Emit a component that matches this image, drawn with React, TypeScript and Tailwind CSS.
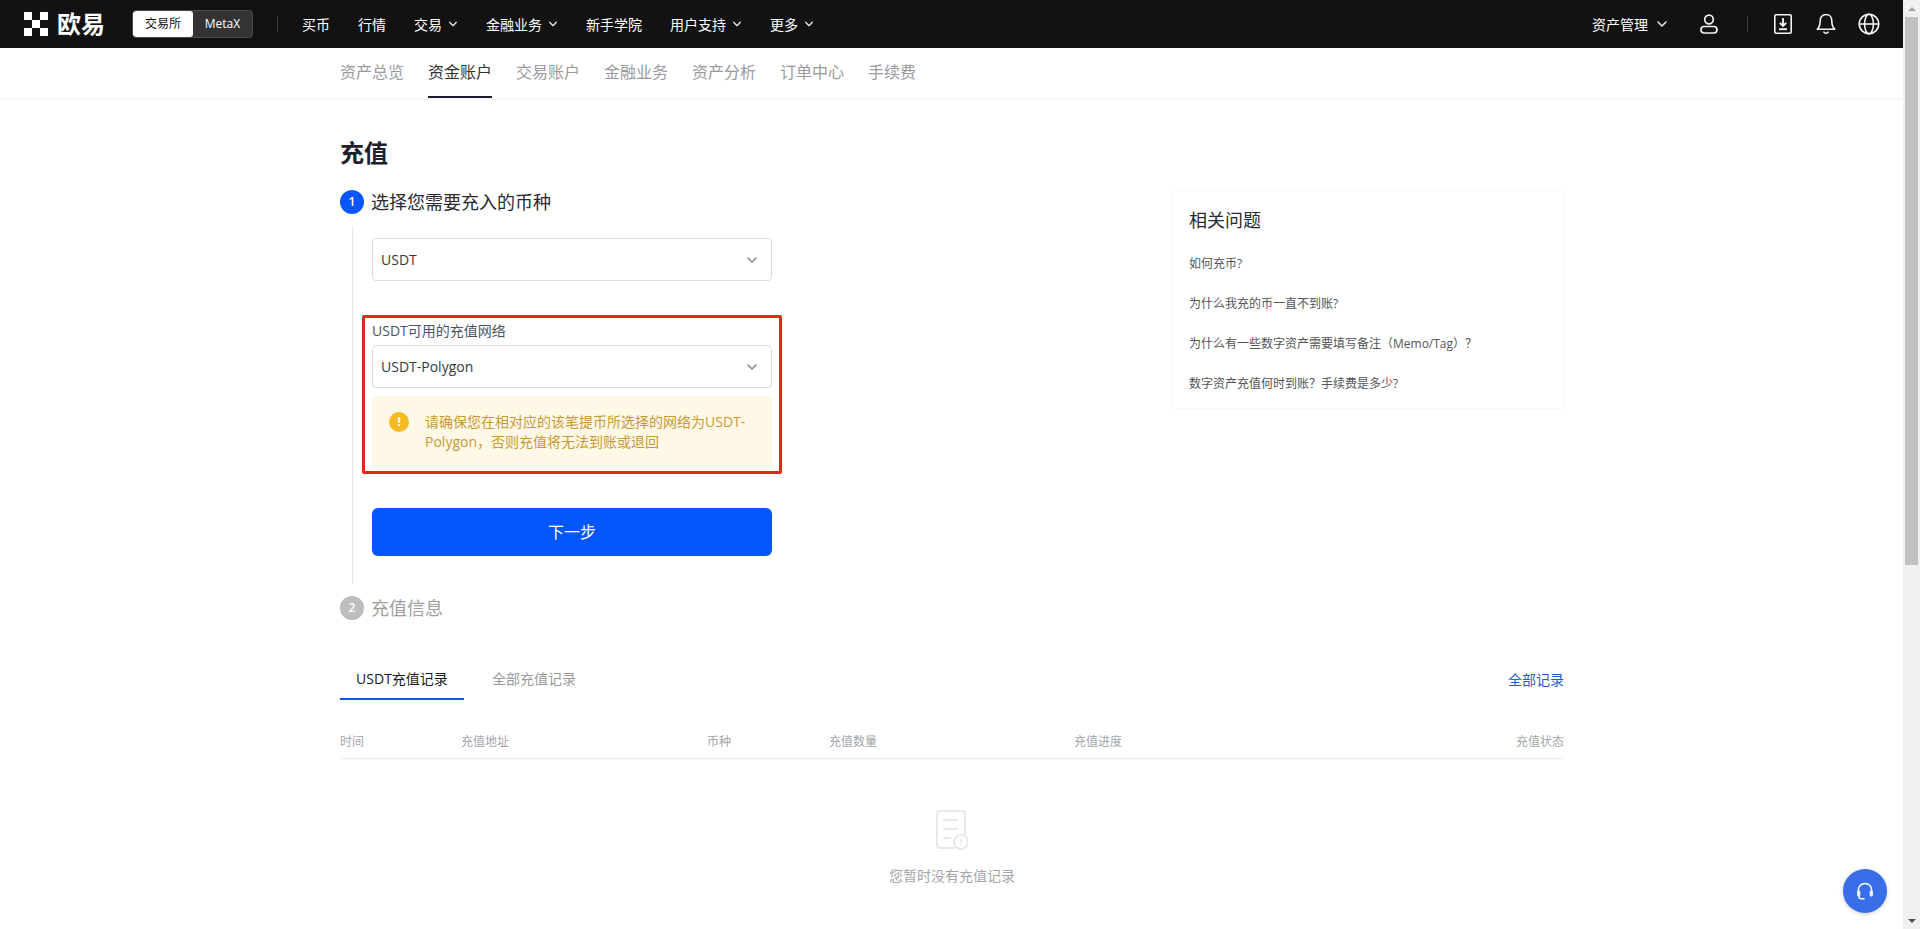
import React from "react";

const FONT = "font-['Open_Sans','Noto_Sans_CJK_SC',sans-serif]";

function Chevron({ className = "" }: { className?: string }) {
  return (
    <svg viewBox="0 0 12 12" fill="none" stroke="currentColor" strokeWidth="1.6" strokeLinecap="round" strokeLinejoin="round" className={className}>
      <path d="M2 4l4 4 4-4" />
    </svg>
  );
}

function NavItem({ label, chevron }: { label: string; chevron?: boolean }) {
  return (
    <div className="flex items-center gap-[6px] text-[14px] text-white">
      <span>{label}</span>
      {chevron && <Chevron className="h-[10px] w-[10px] text-[#e6e6e6]" />}
    </div>
  );
}

function Logo() {
  return (
    <svg viewBox="0 0 24 24" className="h-6 w-6" fill="#fff">
      <rect x="0" y="0" width="8" height="8" />
      <rect x="16" y="0" width="8" height="8" />
      <rect x="8" y="8" width="8" height="8" />
      <rect x="0" y="16" width="8" height="8" />
      <rect x="16" y="16" width="8" height="8" />
    </svg>
  );
}

function TopBar() {
  return (
    <header className="flex h-12 items-center bg-[#121212] pl-6 pr-[23px]">
      <Logo />
      <span className="ml-[9px] w-[48px] text-[24px] leading-none font-bold text-white">欧易</span>
      <div className="ml-[27px] flex h-7 w-[121px] overflow-hidden rounded-[4px] border border-[#4a4a4a] bg-[#333333] text-[12px]">
        <div className="flex w-[60px] items-center justify-center rounded-[3px] bg-white text-[#121212]">交易所</div>
        <div className="flex flex-1 items-center justify-center text-white">MetaX</div>
      </div>
      <div className="ml-6 h-[16px] w-px bg-[#3d3d3d]" />
      <nav className="ml-6 flex items-center gap-7">
        <NavItem label="买币" />
        <NavItem label="行情" />
        <NavItem label="交易" chevron />
        <NavItem label="金融业务" chevron />
        <NavItem label="新手学院" />
        <NavItem label="用户支持" chevron />
        <NavItem label="更多" chevron />
      </nav>
      <div className="ml-auto flex items-center">
        <span className="text-[14px] text-white">资产管理</span>
        <Chevron className="ml-[8px] h-[12px] w-[12px] text-[#e6e6e6]" />
        <svg viewBox="0 0 18 20" fill="none" stroke="#f2f2f2" strokeWidth="1.7" className="ml-[32px] h-5 w-[18px]">
          <circle cx="9" cy="5.5" r="4.3" />
          <rect x="1" y="12.5" width="16" height="6.5" rx="3.2" />
        </svg>
        <div className="ml-[29px] h-[16px] w-px bg-[#3d3d3d]" />
        <svg viewBox="0 0 18 20" fill="none" stroke="#f2f2f2" strokeWidth="1.6" className="ml-[26px] h-5 w-[18px]">
          <rect x="0.8" y="0.8" width="16.4" height="18.4" rx="1.2" />
          <path d="M9 4v8M5.8 8.8L9 12l3.2-3.2" strokeWidth="1.9" />
          <path d="M5 15.2h8" strokeWidth="1.9" />
        </svg>
        <svg viewBox="0 0 20 22" fill="none" stroke="#f2f2f2" strokeWidth="1.6" className="ml-[24px] h-[22px] w-5" strokeLinejoin="round">
          <path d="M10 1.5c-3.6 0-5.8 2.7-5.8 6.2 0 5-1.1 6.8-2.9 8.5h17.4c-1.8-1.7-2.9-3.5-2.9-8.5 0-3.5-2.2-6.2-5.8-6.2z" />
          <path d="M7.5 18.6c.6 1 1.4 1.6 2.5 1.6s1.9-.6 2.5-1.6" />
        </svg>
        <svg viewBox="0 0 22 22" fill="none" stroke="#f2f2f2" strokeWidth="1.6" className="ml-[22px] h-[22px] w-[22px]">
          <circle cx="11" cy="11" r="9.8" />
          <ellipse cx="11" cy="11" rx="4.4" ry="9.8" />
          <path d="M1.2 11h19.6" />
        </svg>
      </div>
    </header>
  );
}

function SubNav() {
  const items = ["资产总览", "资金账户", "交易账户", "金融业务", "资产分析", "订单中心", "手续费"];
  return (
    <div className="h-[52px] border-b-2 border-[#f7f7f7]">
      <div className="ml-[340px] flex h-[50px] gap-6">
        {items.map((t) =>
          t === "资金账户" ? (
            <div key={t} className="flex items-center border-b-2 border-[#1b1b2b] text-[16px] text-[#333333]">
              {t}
            </div>
          ) : (
            <div key={t} className="flex items-center border-b-2 border-transparent text-[16px] text-[#9a9a9e]">
              {t}
            </div>
          )
        )}
      </div>
    </div>
  );
}

function Select({ value }: { value: string }) {
  return (
    <div className="flex h-[43px] w-[400px] items-center justify-between rounded-[4px] border border-[#dcdcdc] pl-2 pr-[13px] text-[14px] text-[#333a45]">
      <span>{value}</span>
      <Chevron className="h-[12px] w-[12px] text-[#8c8c8c]" />
    </div>
  );
}

function StepOne() {
  return (
    <>
      <div className="flex items-center gap-[7px]">
        <div className="flex h-6 w-6 items-center justify-center rounded-full bg-[#0a55fa] text-[12px] font-semibold text-white">1</div>
        <span className="text-[18px] leading-6 text-[#2a2a33]">选择您需要充入的币种</span>
      </div>
      <div className="ml-[12px] mt-3 h-[358px] w-[420px] border-l border-[#e6e6e6] pl-[19px] pt-3">
        <Select value="USDT" />
        <div className="relative mt-[37px] w-[400px]">
          <div className="absolute -left-[10px] -right-[10px] -top-[3px] -bottom-[6px] rounded-[2px] border-[3px] border-[#e2261c]" />
          <div className="h-[27px] pt-[3px] text-[14px] leading-5 text-[#4b5563]">USDT可用的充值网络</div>
          <Select value="USDT-Polygon" />
          <div className="mt-2 flex h-[72px] rounded-[4px] bg-[#fff8e6] pl-[17px] pr-6 pt-4">
            <div className="mt-0 flex h-5 w-5 shrink-0 items-center justify-center rounded-full bg-[#f5b921] text-[13px] font-bold text-white">!</div>
            <p className="ml-[16px] text-[14px] leading-5 text-[#c79a35]">
              请确保您在相对应的该笔提币所选择的网络为USDT-Polygon，否则充值将无法到账或退回
            </p>
          </div>
        </div>
        <div className="mt-10 flex h-12 w-[400px] items-center justify-center rounded-[6px] bg-[#0556ff] text-[16px] text-white">
          下一步
        </div>
      </div>
      <div className="mt-3 flex items-center gap-[7px]">
        <div className="flex h-6 w-6 items-center justify-center rounded-full bg-[#bdbdbd] text-[12px] font-semibold text-white">2</div>
        <span className="text-[18px] leading-6 text-[#9e9e9e]">充值信息</span>
      </div>
    </>
  );
}

function Faq() {
  const qs = ["如何充币?", "为什么我充的币一直不到账?", "为什么有一些数字资产需要填写备注（Memo/Tag）？", "数字资产充值何时到账？手续费是多少?"];
  return (
    <aside className="mr-px mt-[21px] h-[217px] w-[390px] bg-white px-4 pt-[17px] shadow-[0_0_4px_rgba(0,0,0,0.06)]">
      <h2 className="text-[18px] leading-6 text-[#2a2a33]">相关问题</h2>
      <ul className="mt-[22px] flex flex-col gap-[20px]">
        {qs.map((q) => (
          <li key={q} className="text-[12px] leading-5 text-[#555555]">{q}</li>
        ))}
      </ul>
    </aside>
  );
}

function Records() {
  return (
    <section className="mt-[36px]">
      <div className="flex items-start justify-between">
        <div className="flex items-start text-[14px]">
          <div className="flex h-[44px] w-[124px] items-center justify-center border-b-2 border-[#0f56d9] pt-[2px] text-[#1a1a1a]">USDT充值记录</div>
          <div className="ml-7 flex h-[44px] items-center text-[#9a9a9a]">全部充值记录</div>
        </div>
        <div className="flex h-[44px] items-center pt-[2px] text-[14px] text-[#2a5bd7]">全部记录</div>
      </div>
      <div className="mt-[30px] grid h-[29px] grid-cols-[121px_246px_122px_245px_1fr_100px] border-b border-[#ececec] pt-[2px] text-[12px] leading-5 text-[#a5a5aa]">
        <span>时间</span>
        <span>充值地址</span>
        <span>币种</span>
        <span>充值数量</span>
        <span>充值进度</span>
        <span className="text-right">充值状态</span>
      </div>
      <div className="mt-[51px] flex flex-col items-center">
        <svg viewBox="0 0 32 40" fill="none" stroke="#e8e8e8" strokeWidth="2" className="h-10 w-8">
          <path d="M29 25V4a3 3 0 0 0-3-3H4a3 3 0 0 0-3 3v31a3 3 0 0 0 3 3h15" />
          <path d="M7 10h15M7 19h15M7 28h8" strokeWidth="1.8" />
          <circle cx="25" cy="32" r="7" fill="#fff" />
          <path d="M25 28.5v4.5M25 34.6v.9" strokeWidth="1.6" />
        </svg>
        <div className="mt-[16px] text-[14px] leading-5 text-[#a5a5aa]">您暂时没有充值记录</div>
      </div>
    </section>
  );
}

function Scrollbar() {
  return (
    <div className="flex h-[929px] w-[17px] shrink-0 flex-col items-center bg-[#f1f1f1]">
      <div className="flex h-[17px] items-center justify-center">
        <div className="h-0 w-0 border-x-[4px] border-b-[4px] border-x-transparent border-b-[#a3a3a3]" />
      </div>
      <div className="h-[548px] w-[13px] bg-[#c1c1c1]" />
      <div className="mt-auto flex h-[17px] items-center justify-center">
        <div className="h-0 w-0 border-x-[4px] border-t-[4px] border-x-transparent border-t-[#505050]" />
      </div>
    </div>
  );
}

export default function App() {
  return (
    <div className={`relative flex h-[929px] w-[1920px] overflow-hidden bg-white ${FONT}`}>
      <div className="min-w-0 flex-1">
        <TopBar />
        <SubNav />
        <main className="ml-[340px] w-[1224px]">
          <h1 className="mt-[36px] text-[24px] leading-[34px] font-bold text-[#20202c]">充值</h1>
          <div className="flex justify-between">
            <div className="mt-[20px]">
              <StepOne />
            </div>
            <Faq />
          </div>
          <Records />
        </main>
      </div>
      <Scrollbar />
      <div className="absolute left-[1843px] top-[869px] flex h-11 w-11 items-center justify-center rounded-full bg-[#3a6de8] shadow-[0_1px_4px_rgba(0,0,0,0.2)]">
        <svg viewBox="0 0 18 18" fill="none" stroke="#fff" strokeWidth="1.5" className="h-[18px] w-[18px]" strokeLinecap="round">
          <path d="M2.4 9.5V8a6.6 6.6 0 0 1 13.2 0v1.5" />
          <rect x="1" y="8.6" width="3.4" height="6" rx="1.5" fill="#eaf0ff" stroke="none" />
          <rect x="13.6" y="8.6" width="3.4" height="6" rx="1.5" fill="#eaf0ff" stroke="none" />
          <path d="M3 14.5c0 1.5 1 2.3 2.4 2.3H8" />
        </svg>
      </div>
    </div>
  );
}
